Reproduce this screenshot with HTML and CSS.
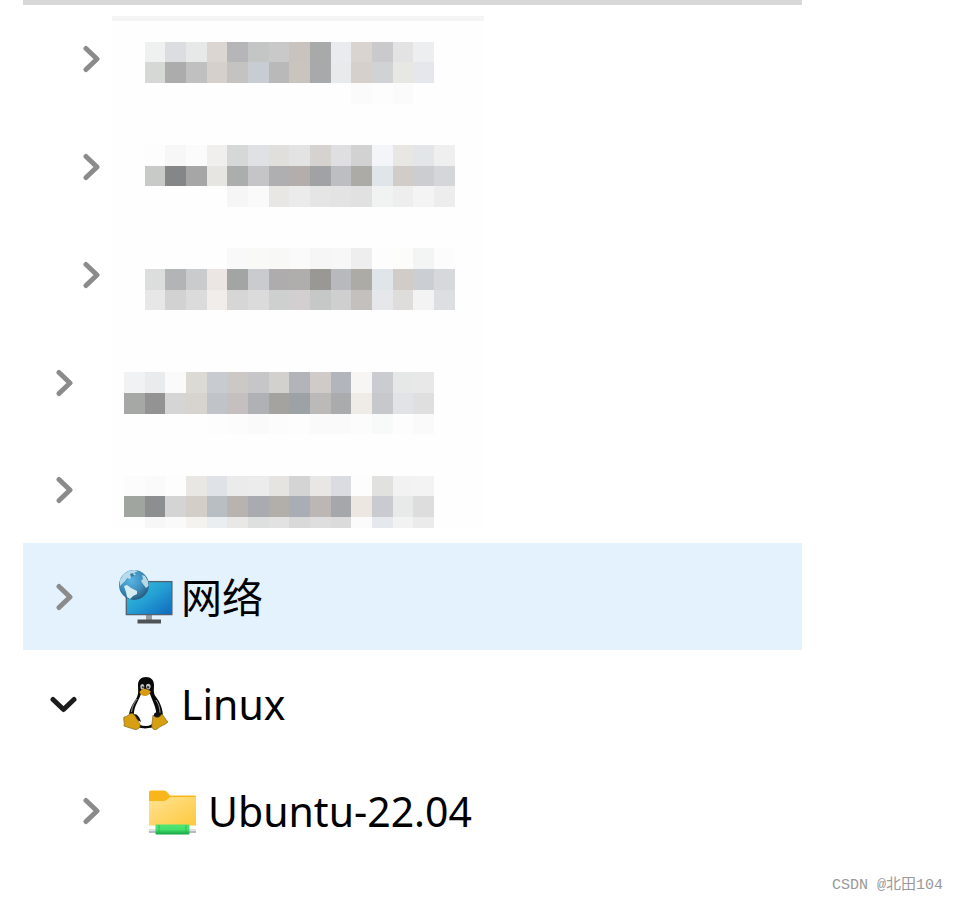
FILE: index.html
```html
<!DOCTYPE html>
<html lang="zh-CN">
<head>
  <meta charset="UTF-8" />
  <meta name="viewport" content="width=device-width, initial-scale=1">
  <title>Linux</title>
  <link rel="stylesheet" href="styles.css">
</head>
<body>
  <main class="panel">
    <!-- Navigation tree -->
    <ul class="tree">
      <li class="row child">
        <button class="toggle" aria-label="展开"><svg viewBox="0 0 28 28"><path d="M9 3.500L20 14L9 24.500"/></svg></button>
      </li>
      <li class="row child">
        <button class="toggle" aria-label="展开"><svg viewBox="0 0 28 28"><path d="M9 3.500L20 14L9 24.500"/></svg></button>
      </li>
      <li class="row child">
        <button class="toggle" aria-label="展开"><svg viewBox="0 0 28 28"><path d="M9 3.500L20 14L9 24.500"/></svg></button>
      </li>
      <li class="row">
        <button class="toggle" aria-label="展开"><svg viewBox="0 0 28 28"><path d="M9 3.500L20 14L9 24.500"/></svg></button>
      </li>
      <li class="row">
        <button class="toggle" aria-label="展开"><svg viewBox="0 0 28 28"><path d="M9 3.500L20 14L9 24.500"/></svg></button>
      </li>
      <li class="row selected">
        <button class="toggle" aria-label="展开"><svg viewBox="0 0 28 28"><path d="M9 3.500L20 14L9 24.500"/></svg></button>
        <svg class="icon" viewBox="0 0 54 54">
          <defs>
            <linearGradient id="screen" x1="0" y1="0" x2="1" y2="1">
              <stop offset="0" stop-color="#35c5dc"/>
              <stop offset="0.5" stop-color="#249fd4"/>
              <stop offset="1" stop-color="#0f68bd"/>
            </linearGradient>
            <radialGradient id="globe" cx="0.4" cy="0.35" r="0.65">
              <stop offset="0" stop-color="#58b4e2"/>
              <stop offset="0.6" stop-color="#3d8fbf"/>
              <stop offset="1" stop-color="#2a5f80"/>
            </radialGradient>
          </defs>
          <rect x="27" y="45" width="6" height="5" fill="#9a9c9e"/>
          <rect x="18.500" y="49.500" width="23.500" height="4" fill="#505356"/>
          <rect x="7.300" y="11.600" width="45.600" height="33" fill="url(#screen)" stroke="#55616b" stroke-width="1.300"/>
          <circle cx="15" cy="15" r="15" fill="url(#globe)"/>
          <path d="M1 10L5 4L10 1L15 0L19 1L15 3L17 5L13 5L11 9L8 8L6 11L3 14L1 16Z" fill="#b9dcea"/>
          <path d="M5 16L8 15L12 18L18 21L18 24L14 26L11 29L8 27L7 22Z" fill="#d5edf0"/>
          <path d="M23 5L26 6L29 11L29.500 16L27 18L24 14L22 11L24 9Z" fill="#b7d9e4"/>
          <path d="M11 4L14 3L15 6L12 7Z" fill="#357da8"/>
        </svg>
        <span class="label">网络</span>
      </li>
      <li class="row">
        <button class="toggle open" aria-label="折叠"><svg viewBox="0 0 28 28"><path d="M3 9.500L13.500 19.500L24 9.500"/></svg></button>
        <svg class="icon" viewBox="0 0 54 54">
          <path d="M27 0C22 0 19 3 19 8C19 14 20 17 17 22C13 28 10 33 10 40L16 50L26 51.500L37 50L44 40C44 32 41 25 37 20C34 16 35 13 35 8C35 3 32 0 27 0Z" fill="#090909"/>
          <path d="M22 17C20 23 16 28 15 35C14 41 17 49 27 49C35 49 38 42 37 34C36 28 33 23 31 17Z" fill="#fff"/>
          <path d="M12.500 35C13 29 16 25 18 22M37 23C40 27 41 32 41 36" fill="none" stroke="#aaa" stroke-width="0.900"/>
          <path d="M15 37C18 37 21 40 22 45L16 42ZM35 37C36 35 39 35 42 36L42 40L35 40Z" fill="#111"/>
          <ellipse cx="23.300" cy="9.800" rx="2" ry="2.700" fill="#c8c8c8"/>
          <ellipse cx="29.300" cy="9.600" rx="2.300" ry="2.800" fill="#c8c8c8"/>
          <circle cx="23.800" cy="10.300" r="1.100" fill="#333"/>
          <circle cx="29" cy="10.300" r="1.200" fill="#333"/>
          <path d="M20.500 15C22 12 25 11 27 12L31.500 14C32 17 28 19 26 19C23 19 21 17 20.500 15Z" fill="#d99b12"/>
          <path d="M5 40C9 40 10 36 13 36.500C16 37 18 43 21 47C22 50 19 53 16 52.500L5 49C6 45 4 43 5 40Z" fill="#d6a012" stroke="#80651c" stroke-width="0.700"/>
          <path d="M34 38C36 41 40 42 43 37C45 39 46 42 49 45C46 48 41 49 38 52C35 54 32 51 33 47Z" fill="#d6a012" stroke="#80651c" stroke-width="0.700"/>
        </svg>
        <span class="label">Linux</span>
      </li>
      <li class="row child">
        <button class="toggle" aria-label="展开"><svg viewBox="0 0 28 28"><path d="M9 3.500L20 14L9 24.500"/></svg></button>
        <svg class="icon" viewBox="0 0 54 54">
          <defs>
            <linearGradient id="folder" x1="0" y1="0" x2="1" y2="1">
              <stop offset="0" stop-color="#ffe394"/>
              <stop offset="1" stop-color="#fdc83c"/>
            </linearGradient>
            <linearGradient id="pipe" x1="0" y1="0" x2="0" y2="1">
              <stop offset="0" stop-color="#4fe576"/>
              <stop offset="0.500" stop-color="#45df6b"/>
              <stop offset="1" stop-color="#16a444"/>
            </linearGradient>
          </defs>
          <path d="M3 8Q3 6.500 5 6.500H18Q20 6.500 21.500 8.500L24 11.500H49Q50 11.500 50 13V20H3Z" fill="#f9b61b"/>
          <path d="M3 17H18Q20 17 22 15L24 13H50V41.500H3Z" fill="url(#folder)"/>
          <rect x="3" y="45.500" width="47" height="3.500" fill="#b9bbbd"/>
          <rect x="3" y="45.500" width="47" height="1.500" fill="#dfe1e3"/>
          <rect x="9.500" y="40.500" width="34" height="10" rx="1" fill="url(#pipe)"/>
          <path d="M13 41V50M40 41V50" stroke="#22b650" stroke-width="0.800"/>
        </svg>
        <span class="label">Ubuntu-22.04</span>
      </li>
    </ul>
    <!-- Pixelated cover over the private names -->
    <svg class="mosaic" id="mosaic" viewBox="0 0 372 512" aria-hidden="true"></svg>
  </main>

  <footer>CSDN @北田104</footer>

  <script>
    // One entry per line of cells: [line, first column, colors]
    const lines = [
      [0, 1, 'eff1f0 dcdde0 e7e9e8 dcd6d2 b6b6b8 c4c6c5 c9c9ca c8c3be a8a9a9 e9ebee d9d4d0 cacacd e3e3e3 edeef0'],
      [1, 1, 'd6d8d5 acacac c0c0c1 d6d0cd c5c3c1 c8ccd3 b9b9b9 c9c4be a8a9aa e8eaec d5d0cc d0d2d3 e7e7e4 e5e7ec'],
      [2, 11, 'fbfbfb fdfdfd fbfbfb'],
      [5, 1, 'fdfdfd f7f7f7 fbfbfb f1efed d5d8d7 dfe1e5 e1dfdc e3e3e3 d5d2cf dfdfe2 d2d2d2 f3f5f8 e9e7e4 e3e6e9 efefef'],
      [6, 1, 'c8cac7 858688 a6a6a6 e7e5e2 acaeae c5c5c8 afafb2 b3adac a0a2a4 bdbec1 acaba6 e0e5e9 d2ccc8 cbcdd1 d5d6d9'],
      [7, 5, 'f6f6f6 fafafa e9e7e4 ebebeb e5e5e5 e3e3e3 e1e1e1 f1f3f2 eeeeee f4f4f4 ededed'],
      [10, 5, 'f9f9f9 f9f9f8 f8f8f6 fafafa f6f6f6 f7f7f7 eeeeee fdfdfd fcfcfa f3f5f4 fcfcfc'],
      [11, 1, 'dbdedc b2b4b6 c9cbcd ebe6e4 a2a5a3 cacbce aeacad afaeac 999895 b7b9bc acaba6 e0e5e9 d2ccc8 cbcfd4 d7d8db'],
      [12, 1, 'e7e7e7 d2d2d2 dbdbdb f0edea d6d6d6 dbdbdc cecfcf d3cfd1 c5c8c7 cfcfd0 c3c0bd e5e7eb dfdddb f3f3f3 dddee1'],
      [16, 0, 'f0f2f4 e9ebed fafafa dcdad5 c8ccd1 cbc8c6 c6c6c9 d2d1cd b2b4ba d0cbc8 b2b5bb f8f6f4 cbcccf e6e8e7 e7e8e7'],
      [17, 0, 'a5a8a4 939393 d5d5d6 d7d4cf c0c4c9 c6bfbf afb1b5 a4a39f 9da2a6 bbbab8 a9abad efebe7 c6c8cb e1e3e6 dfdfdf'],
      [18, 4, 'fdfdfd fcfcfc fafafa fcfcfc fdfdfd fafafa fafafa fcfcfc f7faf8 fdfdfd fafafa'],
      [21, 0, 'fcfcfc fafafa fdfdfd e9e7e4 dfe2e6 ebebeb ececec e5e4e1 d4d4d5 e8e7e5 dadce2 fdfdfd e1e1df f2f2f2 f3f3f3'],
      [22, 0, 'a0a5a0 8d8e8f d4d4d5 d3cec8 b9bec2 b9b3af a9abb0 b2afab a9aeb6 bcb7b4 a5a7aa ede7e2 c9cbd1 e8eae9 dddddd'],
      [23, 1, 'f7f7f7 fafafa f5f3f0 ebeef1 e9e8e6 dde0df e2e2e3 d9d9d9 dedede dbdbdb fbfbfb e5e8ec f2f2f2 ebebeb']
    ];
    const mosaic = document.getElementById('mosaic');
    const cell = 62 / 3;

    function addRect(x, y, width, height, fill) {
      const rect = document.createElementNS('http://www.w3.org/2000/svg', 'rect');
      rect.setAttribute('x', x);
      rect.setAttribute('y', y);
      rect.setAttribute('width', width);
      rect.setAttribute('height', height);
      rect.setAttribute('fill', fill);
      mosaic.appendChild(rect);
    }

    addRect(0, 0, 372, 5, '#f4f4f4');
    lines.forEach(([line, column, colors]) => {
      colors.split(' ').forEach((color, i) => {
        const x = Math.round(12 + (column + i) * cell);
        const y = Math.round(25.5 + line * cell);
        const right = Math.round(12 + (column + i + 1) * cell);
        const bottom = Math.round(25.5 + (line + 1) * cell);
        addRect(x, y, right - x, bottom - y, '#' + color);
      });
    });
  </script>
</body>
</html>
```

FILE: styles.css
```css
body {
  margin: 0;
  background-color: #fff;
  color: #000;
  font-family: "Noto Sans", "Noto Sans CJK SC", sans-serif;
}
.panel {
  position: relative;
  margin: 0 156px 0 23px;
  border-top: 5px solid #d8d8d8;
}
/* Tree rows */
.tree {
  margin: 0;
  padding: 0;
  list-style: none;
}
.row {
  display: flex;
  align-items: center;
  height: 107px;
  padding-left: 27px;
}
.row.child {
  height: 108px;
  padding-left: 54px;
}
.row.selected {
  background-color: #e4f2fe;
}
.toggle {
  width: 28px;
  height: 28px;
  margin-right: 41px;
  padding: 0;
  border: none;
  background: none;
  color: #8b8b8b;
  cursor: pointer;
}
.toggle.open {
  color: #1c1c1c;
}
.toggle svg {
  display: block;
  fill: none;
  stroke: currentColor;
  stroke-width: 5;
  stroke-linecap: round;
  stroke-linejoin: round;
}
.icon {
  width: 54px;
  height: 54px;
  margin-right: 8px;
}
.label {
  font-size: 41px;
  line-height: 56px;
  white-space: nowrap;
}
/* Mosaic lies over the first rows */
.mosaic {
  position: absolute;
  top: 11px;
  left: 89px;
  width: 372px;
  height: 512px;
  background-color: #fefefe;
}
footer {
  padding: 10px 15px;
  color: #999;
  font-family: "Liberation Mono", "Noto Sans CJK SC", monospace;
  font-size: 15px;
  line-height: 22px;
  text-align: right;
}
```
